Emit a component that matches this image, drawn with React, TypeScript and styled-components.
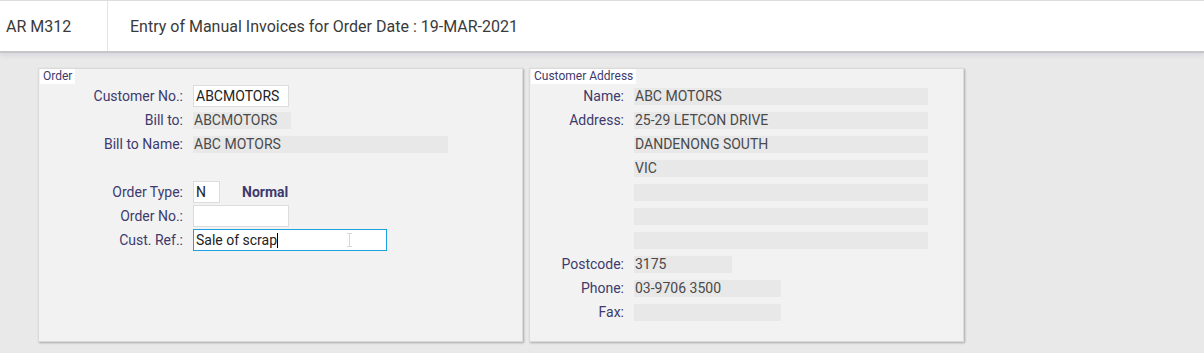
import styled, { createGlobalStyle } from 'styled-components';

const GlobalStyle = createGlobalStyle`
  html, body {
    margin: 0;
    padding: 0;
    background: #e9e9e9;
    font-family: Roboto, "Liberation Sans", Arial, sans-serif;
  }
`;

const Page = styled.div`
  width: 1204px;
  height: 353px;
  background: #e9e9e9;
  overflow: hidden;
`;

const Header = styled.header`
  display: flex;
  align-items: stretch;
  height: 50px;
  background: #fff;
  border-top: 1px solid #dcdcdc;
  border-bottom: 2px solid #c6c6c6;
  box-shadow: 0 2px 5px rgba(90, 80, 150, 0.14);
  color: #3a3a3a;
  font-size: 16px;
`;

const Code = styled.div`
  display: flex;
  align-items: center;
  width: 101px;
  padding-left: 6px;
  border-right: 1px solid #e4e4e4;
`;

const Title = styled.div`
  display: flex;
  align-items: center;
  padding-left: 22px;
`;

const Body = styled.main`
  display: flex;
  gap: 6px;
  padding: 15px 0 0 38px;
`;

const Panel = styled.section<{ $width: number }>`
  position: relative;
  box-sizing: border-box;
  width: ${({ $width }) => $width}px;
  height: 274px;
  background: #f2f2f2;
  border: 1px solid #dadada;
  box-shadow: 1px 1px 2px rgba(0, 0, 0, 0.28);
`;

const Legend = styled.div`
  position: absolute;
  top: 0;
  left: 1px;
  padding: 0 3px 1px 3px;
  background: #fff;
  color: #3e3a6d;
  font-size: 12px;
  line-height: 14px;
`;

const Form = styled.div<{ $labelWidth: number }>`
  display: grid;
  grid-template-columns: ${({ $labelWidth }) => $labelWidth}px 1fr;
  grid-auto-rows: 24px;
  column-gap: 10px;
  padding-top: 15px;
`;

const Label = styled.div`
  display: flex;
  align-items: center;
  justify-content: flex-end;
  color: #3e3a6d;
  font-size: 14px;
`;

const Cell = styled.div`
  display: flex;
  align-items: center;
  gap: 22px;
`;

const Display = styled.div<{ $width: number }>`
  box-sizing: border-box;
  width: ${({ $width }) => $width}px;
  height: 17px;
  padding-left: 1px;
  background: #e8e8e8;
  color: #4a4a4a;
  font-size: 14px;
  line-height: 17px;
  white-space: nowrap;
`;

const Input = styled.div<{ $width: number; $focused?: boolean }>`
  position: relative;
  display: flex;
  align-items: center;
  box-sizing: border-box;
  width: ${({ $width }) => $width}px;
  height: 22px;
  padding-left: 2px;
  background: #fff;
  border: 1px solid ${({ $focused }) => ($focused ? '#1aa3e0' : '#dcdcdc')};
  color: #222;
  font-size: 14px;
  white-space: nowrap;
`;

const Caret = styled.span`
  display: inline-block;
  width: 1px;
  height: 15px;
  background: #000;
`;

const Pointer = styled.svg`
  position: absolute;
  left: 152px;
  top: 3px;
`;

const Strong = styled.span`
  color: #3e3a6d;
  font-size: 14px;
  font-weight: 700;
`;

type Line = { label: string; value?: string; width: number };

const addressLines: Line[] = [
  { label: 'Name:', value: 'ABC MOTORS', width: 294 },
  { label: 'Address:', value: '25-29 LETCON DRIVE', width: 294 },
  { label: '', value: 'DANDENONG SOUTH', width: 294 },
  { label: '', value: 'VIC', width: 294 },
  { label: '', width: 294 },
  { label: '', width: 294 },
  { label: '', width: 294 },
  { label: 'Postcode:', value: '3175', width: 98 },
  { label: 'Phone:', value: '03-9706 3500', width: 147 },
  { label: 'Fax:', width: 147 },
];

export default function App() {
  return (
    <Page>
      <GlobalStyle />
      <Header>
        <Code>AR M312</Code>
        <Title>Entry of Manual Invoices for Order Date : 19-MAR-2021</Title>
      </Header>
      <Body>
        <Panel $width={485}>
          <Legend>Order</Legend>
          <Form $labelWidth={144}>
            <Label>Customer No.:</Label>
            <Cell>
              <Input $width={96}>ABCMOTORS</Input>
            </Cell>
            <Label>Bill to:</Label>
            <Cell>
              <Display $width={98}>ABCMOTORS</Display>
            </Cell>
            <Label>Bill to Name:</Label>
            <Cell>
              <Display $width={255}>ABC MOTORS</Display>
            </Cell>
            <Label />
            <Cell />
            <Label>Order Type:</Label>
            <Cell>
              <Input $width={27}>N</Input>
              <Strong>Normal</Strong>
            </Cell>
            <Label>Order No.:</Label>
            <Cell>
              <Input $width={96} />
            </Cell>
            <Label>Cust. Ref.:</Label>
            <Cell>
              <Input $width={194} $focused>
                Sale of scrap
                <Caret />
                <Pointer width="7" height="14" viewBox="0 0 7 14">
                  <path
                    d="M1 0.5h5M3.5 0.5v13M1 13.5h5"
                    stroke="#d8d8d8"
                    strokeWidth="1"
                    fill="none"
                  />
                </Pointer>
              </Input>
            </Cell>
          </Form>
        </Panel>
        <Panel $width={435}>
          <Legend>Customer Address</Legend>
          <Form $labelWidth={94}>
            {addressLines.map((line, i) => (
              <Row key={i} line={line} />
            ))}
          </Form>
        </Panel>
      </Body>
    </Page>
  );
}

function Row({ line }: { line: Line }) {
  return (
    <>
      <Label>{line.label}</Label>
      <Cell>
        <Display $width={line.width}>{line.value}</Display>
      </Cell>
    </>
  );
}
